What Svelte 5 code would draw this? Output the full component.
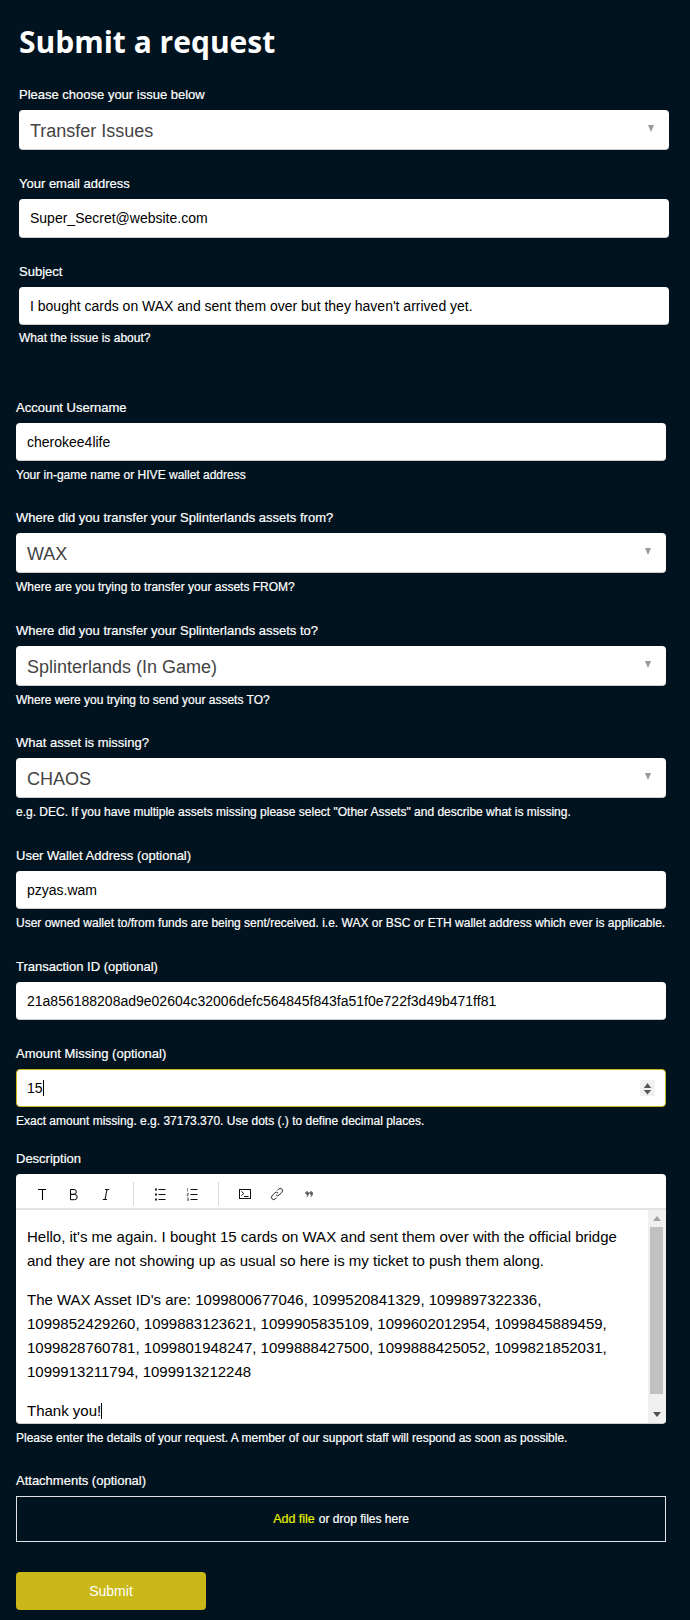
<script>
  const fields = [
    { label: 'Where did you transfer your Splinterlands assets from?', value: 'WAX', select: true, help: 'Where are you trying to transfer your assets FROM?', cls: 'gap-a' },
    { label: 'Where did you transfer your Splinterlands assets to?', value: 'Splinterlands (In Game)', select: true, help: 'Where were you trying to send your assets TO?', cls: 'gap-b' },
    { label: 'What asset is missing?', value: 'CHAOS', select: true, help: 'e.g. DEC. If you have multiple assets missing please select "Other Assets" and describe what is missing.', cls: 'gap-a' },
    { label: 'User Wallet Address (optional)', value: 'pzyas.wam', help: 'User owned wallet to/from funds are being sent/received. i.e. WAX or BSC or ETH wallet address which ever is applicable.', cls: 'gap-b' },
    { label: 'Transaction ID (optional)', value: '21a856188208ad9e02604c32006defc564845f843fa51f0e722f3d49b471ff81', cls: 'gap-b' }
  ];
</script>

<main class="page">
  <section class="top">
    <h1>Submit a request</h1>

    <div class="field first">
      <div class="label">Please choose your issue below</div>
      <div class="control select"><span>Transfer Issues</span><i class="caret-down"></i></div>
    </div>
    <div class="field second">
      <div class="label">Your email address</div>
      <div class="control tall">Super_Secret@website.com</div>
    </div>
    <div class="field second">
      <div class="label">Subject</div>
      <div class="control">I bought cards on WAX and sent them over but they haven't arrived yet.</div>
      <div class="help">What the issue is about?</div>
    </div>
  </section>

  <section class="rest">
    <div class="field">
      <div class="label">Account Username</div>
      <div class="control">cherokee4life</div>
      <div class="help">Your in-game name or HIVE wallet address</div>
    </div>

    {#each fields as f}
      <div class="field {f.cls}">
        <div class="label">{f.label}</div>
        {#if f.select}
          <div class="control select"><span>{f.value}</span><i class="caret-down"></i></div>
        {:else}
          <div class="control">{f.value}</div>
        {/if}
        {#if f.help}<div class="help">{f.help}</div>{/if}
      </div>
    {/each}

    <div class="field gap-amount">
      <div class="label">Amount Missing (optional)</div>
      <div class="control focused">
        <span>15<b class="cursor"></b></span>
        <span class="spin">
          <svg width="15" height="16" viewBox="0 0 15 16"><path d="M7.5 3 11.2 8H3.8zM3.8 10H11.2L7.5 14.5z" fill="#555"/></svg>
        </span>
      </div>
      <div class="help">Exact amount missing. e.g. 37173.370. Use dots (.) to define decimal places.</div>
    </div>

    <div class="field gap-desc">
      <div class="label">Description</div>
      <div class="editor">
        <div class="toolbar">
          <div class="tgroup wide">
            <span class="tool"><svg width="14" height="14" viewBox="0 0 14 14"><path d="M3 2.5h8M7.5 2.5V13" fill="none" stroke="#000" stroke-width="1.1"/></svg></span>
            <span class="tool"><svg width="14" height="14" viewBox="0 0 14 14"><path d="M3.5 2.5H7a2.3 2.3 0 0 1 0 4.7H3.5zM3.5 7.5H7.6a2.6 2.6 0 0 1 0 5.2H3.5z" fill="none" stroke="#000"/></svg></span>
            <span class="tool"><svg width="14" height="14" viewBox="0 0 14 14"><path d="M6 2.5h4.2M3.8 12.5H8M8 2.5 6 12.5" fill="none" stroke="#111" stroke-width="1.1"/></svg></span>
          </div>
          <div class="tgroup">
            <span class="tool"><svg width="14" height="14" viewBox="0 0 14 14"><path d="M5.5 2.5h7M5.5 7.5h7M5.5 12.5h7" fill="none" stroke="#111"/><path d="M2 1.5h2v2H2zM2 6.5h2v2H2zM2 11.5h2v2H2z" fill="#222"/></svg></span>
            <span class="tool"><svg width="14" height="14" viewBox="0 0 14 14"><path d="M5.5 2.5h7M5.5 7.5h7M5.5 12.5h7" fill="none" stroke="#111"/><path d="M2.5 1v3.5M2 6.5h1.4v1.2H2v1.2h1.4M2 11h1.4v3H2M2.2 12.5h1.2" fill="none" stroke="#333" stroke-width=".6"/></svg></span>
          </div>
          <div class="tgroup">
            <span class="tool"><svg width="14" height="14" viewBox="0 0 14 14"><rect x="1.5" y="2.5" width="11" height="9" fill="none" stroke="#111"/><path d="M3.4 4.4 5.8 6.5 3.4 8.6" fill="none" stroke="#111"/><path d="M6 9.5h4.6" fill="none" stroke="#111"/></svg></span>
            <span class="tool"><svg width="14" height="14" viewBox="0 0 14 14"><path d="M6 8a2.2 2.2 0 0 0 3.2 0l2.7-2.7a2.2 2.2 0 0 0-3.2-3.2L7.4 3.4M8 6a2.2 2.2 0 0 0-3.2 0L2.1 8.7a2.2 2.2 0 0 0 3.2 3.2l1.3-1.3" fill="none" stroke="#222"/></svg></span>
            <span class="tool"><svg width="14" height="14" viewBox="0 0 14 14"><g fill="none" stroke="#111" stroke-width=".9"><circle cx="5" cy="6" r="1.2"/><path d="M6.2 6c0 1.8-.4 3-1.4 3.8"/><circle cx="9" cy="6" r="1.2"/><path d="M10.2 6c0 1.8-.4 3-1.4 3.8"/></g></svg></span>
          </div>
        </div>
        <div class="edit-area">
          <div class="content">
            <p>Hello, it's me again. I bought 15 cards on WAX and sent them over with the official bridge and they are not showing up as usual so here is my ticket to push them along.</p>
            <p>The WAX Asset ID's are: 1099800677046, 1099520841329, 1099897322336, 1099852429260, 1099883123621, 1099905835109, 1099602012954, 1099845889459, 1099828760781, 1099801948247, 1099888427500, 1099888425052, 1099821852031, 1099913211794, 1099913212248</p>
            <p>Thank you!<b class="cursor"></b></p>
          </div>
          <div class="scrollbar">
            <div class="btn"><i class="arrow up"></i></div>
            <div class="thumb"></div>
            <div class="btn end"><i class="arrow down"></i></div>
          </div>
        </div>
      </div>
      <div class="help">Please enter the details of your request. A member of our support staff will respond as soon as possible.</div>
    </div>

    <div class="field gap-attach">
      <div class="label">Attachments (optional)</div>
      <div class="drop"><span class="add">Add file</span> or drop files here</div>
    </div>

    <div class="submit">Submit</div>
  </section>
</main>

<style>
  :global(body) {
    margin: 0;
    background: #01131f;
  }
  .page {
    width: 690px;
    height: 1620px;
    overflow: hidden;
    box-sizing: border-box;
    background: #01131f;
    color: #fff;
    font-family: "Liberation Sans", Arial, sans-serif;
    font-size: 13px;
  }
  .top {
    padding: 20px 21px 0 19px;
  }
  .rest {
    padding: 0 24px 0 16px;
    margin-top: 55px;
  }
  h1 {
    margin: 0;
    font-family: "Open Sans", sans-serif;
    font-size: 30px;
    line-height: 44px;
    font-weight: 700;
  }
  .label {
    font-size: 13px;
    line-height: 15px;
    margin-bottom: 8px;
    -webkit-text-stroke: 0.2px #fff;
  }
  .control {
    background: #fff;
    border-radius: 4px;
    border-bottom: 1px solid #ccc;
    box-sizing: border-box;
    height: 38px;
    padding: 0 11px;
    display: flex;
    align-items: center;
    justify-content: space-between;
    color: #000;
    font-size: 14px;
  }
  .tall { height: 39px; }
  .select {
    height: 40px;
    font-size: 18px;
    color: #444;
  }
  .select span { padding-top: 3px; }
  .caret-down {
    width: 0;
    height: 0;
    border-left: 3px solid transparent;
    border-right: 3px solid transparent;
    border-top: 7px solid #999;
    margin: 0 4px 3px 0;
  }
  .help {
    font-size: 12px;
    line-height: 14px;
    margin-top: 7px;
    white-space: nowrap;
    -webkit-text-stroke: 0.2px #fff;
  }
  .top .help { margin-top: 6px; }
  .first { margin-top: 23px; }
  .second { margin-top: 26px; }
  .gap-a { margin-top: 28px; }
  .gap-b { margin-top: 29px; }
  .gap-amount { margin-top: 26px; }
  .gap-desc { margin-top: 23px; }
  .gap-attach { margin-top: 28px; }
  .focused {
    border: 1px solid #c9b818;
    padding-left: 10px;
    padding-right: 10px;
  }
  .cursor {
    display: inline-block;
    width: 1px;
    height: 16px;
    background: #000;
    vertical-align: -3px;
  }
  .spin {
    width: 15px;
    height: 16px;
    background: #f0f0f0;
    display: flex;
  }
  .editor {
    background: #fff;
    border-radius: 4px;
    border-bottom: 1px solid #ccc;
    overflow: hidden;
    height: 250px;
    box-sizing: border-box;
    display: flex;
    flex-direction: column;
    color: #000;
  }
  .toolbar {
    flex: none;
    border-bottom: 2px solid #e3e3e3;
    display: flex;
    align-items: flex-start;
    padding: 8px 0 0 10px;
    box-sizing: border-box;
    height: 36px;
  }
  .tgroup {
    display: flex;
    align-items: center;
    height: 24px;
    padding-right: 10px;
    margin-right: 10px;
    border-right: 1px solid #ddd;
  }
  .tgroup.wide { padding-right: 11px; }
  .tgroup:last-child { border-right: 0; }
  .tool {
    width: 32px;
    display: flex;
    justify-content: center;
  }
  .edit-area {
    flex: 1;
    min-height: 0;
    display: flex;
  }
  .content {
    flex: 1;
    padding: 15px 8px 0 11px;
    font-size: 15px;
    line-height: 24px;
    overflow: hidden;
  }
  .content p { margin: 0 0 15px; }
  .scrollbar {
    width: 18px;
    flex: none;
    box-sizing: border-box;
    padding: 0 3px 0 2px;
    background: #f0f0f0;
    display: flex;
    flex-direction: column;
  }
  .btn {
    height: 17px;
    flex: none;
    display: flex;
    align-items: center;
    justify-content: center;
  }
  .btn.end { margin-top: auto; }
  .arrow {
    width: 0;
    height: 0;
    border-left: 4px solid transparent;
    border-right: 4px solid transparent;
  }
  .arrow.up { border-bottom: 5px solid #a3a3a3; }
  .arrow.down { border-top: 5px solid #505050; }
  .thumb { height: 167px; flex: none; background: #c1c1c1; }
  .drop {
    height: 46px;
    box-sizing: border-box;
    border: 1px solid #dfe3e6;
    display: flex;
    align-items: center;
    justify-content: center;
    gap: 4px;
    font-size: 12px;
    -webkit-text-stroke: 0.2px currentColor;
  }
  .add { color: #e6f000; font-size: 12.5px; }
  .submit {
    margin-top: 30px;
    width: 190px;
    height: 38px;
    background: #c9b818;
    border-radius: 4px;
    display: flex;
    align-items: center;
    justify-content: center;
    font-size: 14px;
  }
</style>
